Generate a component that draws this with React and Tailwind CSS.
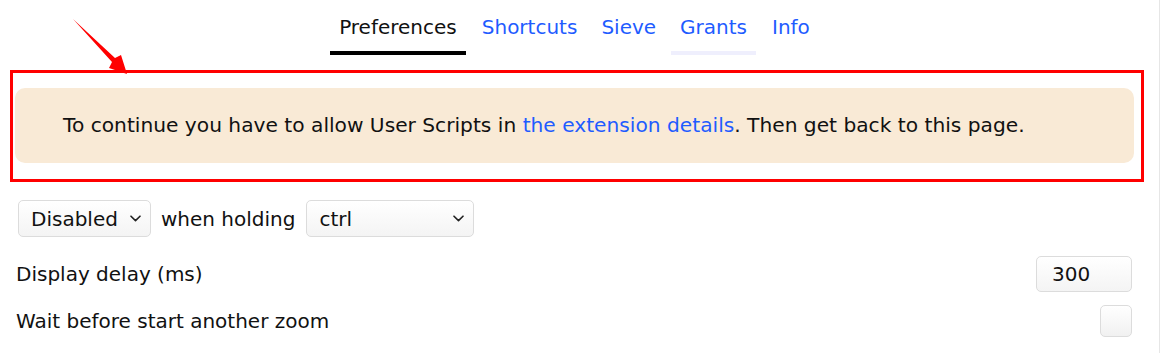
import React from "react";

function Chevron({ className }) {
  return (
    <svg className={className} width="11" height="7" viewBox="0 0 11 7" fill="none">
      <path d="M1 1.2 L5.5 5.6 L10 1.2" stroke="#222" strokeWidth="1.6" strokeLinecap="round" strokeLinejoin="round" />
    </svg>
  );
}

export default function App() {
  const font = { fontFamily: '"DejaVu Sans", Verdana, sans-serif' };
  return (
    <div className="relative w-[1160px] h-[353px] bg-white text-[#111] border-r border-[#e6e6e6] overflow-hidden" style={font}>
      {/* Annotation arrow */}
      <svg className="absolute left-0 top-0 pointer-events-none" width="140" height="80" viewBox="0 0 140 80">
        <polygon points="73,19 115,58 121,55 127,74 109,68 112,62" fill="#ff0000" />
      </svg>

      {/* Tabs */}
      <nav className="flex justify-center pt-[12px] pr-[10px] gap-[7px] text-[20px]">
        <div className="px-[9px] leading-[30px] pb-[9px] border-b-4 border-black text-[#111]">Preferences</div>
        <div className="px-[9px] leading-[30px] pb-[9px] border-b-4 border-transparent text-[#1f5cff]">Shortcuts</div>
        <div className="px-[8px] leading-[30px] pb-[9px] border-b-4 border-transparent text-[#1f5cff]">Sieve</div>
        <div className="px-[9px] leading-[30px] pb-[9px] border-b-4 border-[#efeffd] text-[#1f5cff]">Grants</div>
        <div className="px-[9px] leading-[30px] pb-[9px] border-b-4 border-transparent text-[#1f5cff]">Info</div>
      </nav>

      {/* Annotated banner */}
      <div className="mt-[15px] ml-[10px] mr-[15px] border-[3px] border-[#ff0000] pt-[15px] pb-[16px] pl-[2px] pr-[7px]">
        <div className="h-[75px] rounded-[10px] bg-[#f9ead6] flex items-center pl-[48px] text-[20.2px]">
          <span>
            To continue you have to allow User Scripts in{" "}
            <span className="text-[#1f5cff]">the extension details</span>. Then get back to this page.
          </span>
        </div>
      </div>

      {/* Select row */}
      <div className="mt-[18px] pl-[18px] flex items-center text-[20px]">
        <div className="h-[37px] w-[133px] rounded-[5px] border border-[#dcdcdc] bg-gradient-to-b from-white to-[#f4f4f4] flex items-center pl-[12px] pr-[9px] justify-between">
          <span>Disabled</span>
          <Chevron />
        </div>
        <span className="ml-[10px] mr-[11px]">when holding</span>
        <div className="h-[37px] w-[168px] rounded-[5px] border border-[#dcdcdc] bg-gradient-to-b from-white to-[#f4f4f4] flex items-center pl-[12px] pr-[9px] justify-between">
          <span>ctrl</span>
          <Chevron />
        </div>
      </div>

      {/* Display delay */}
      <div className="mt-[19px] pl-[16px] pr-[27px] flex items-center justify-between text-[20px]">
        <span>Display delay (ms)</span>
        <div className="h-[36px] w-[96px] rounded-[5px] border border-[#dcdcdc] bg-gradient-to-b from-white to-[#f4f4f4] flex items-center pl-[15px]">
          300
        </div>
      </div>

      {/* Wait before */}
      <div className="mt-[13px] pl-[16px] pr-[27px] flex items-center justify-between text-[20px]">
        <span>Wait before start another zoom</span>
        <div className="h-[32px] w-[32px] rounded-[5px] border border-[#dcdcdc] bg-gradient-to-b from-white to-[#f1f1f1]" />
      </div>
    </div>
  );
}
